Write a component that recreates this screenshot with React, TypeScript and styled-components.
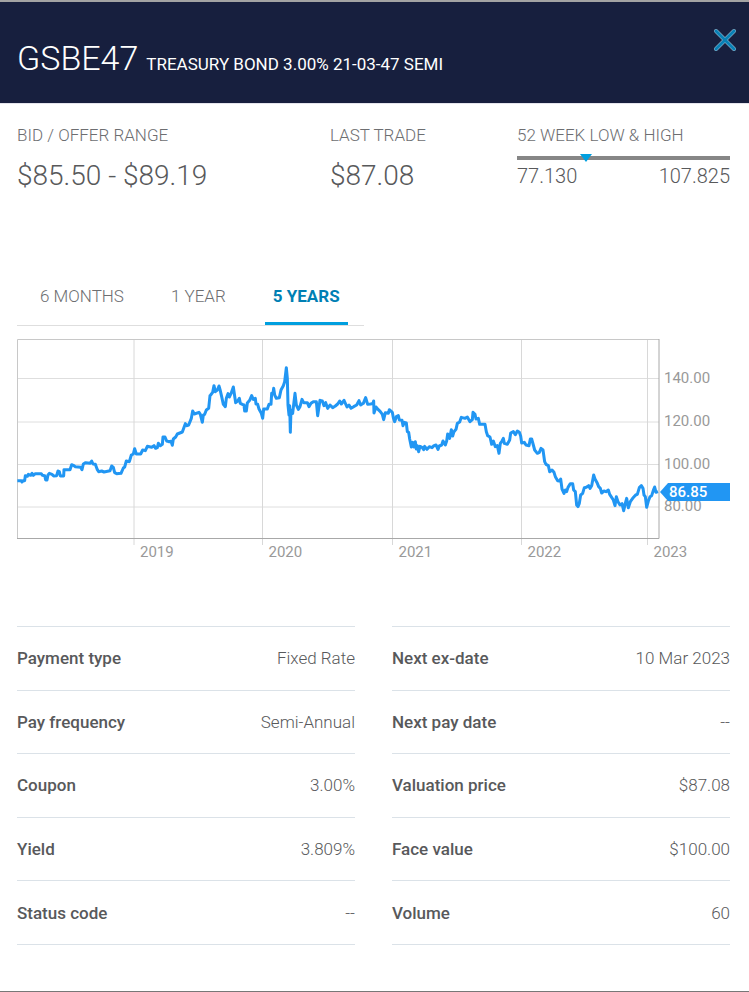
import React from "react";
import styled, { createGlobalStyle } from "styled-components";

const GlobalStyle = createGlobalStyle`
  *, *::before, *::after { box-sizing: border-box; }
  body {
    margin: 0;
    background: #fff;
    color: #58595b;
    font-family: Roboto, "Open Sans", sans-serif;
  }
`;

const Panel = styled.main`
  display: flex;
  flex-direction: column;
  min-height: 100vh;
  border-top: 2px solid #a3a3a3;
  border-bottom: 1px solid #777;
`;

const Header = styled.header`
  display: flex;
  align-items: flex-start;
  justify-content: space-between;
  padding: 24px 12px 17px 17px;
  background: #171f3e;
  color: #fff;
  border-bottom: 1px solid #e4e4ec;
`;

const Title = styled.h1`
  display: flex;
  flex-wrap: wrap;
  align-items: baseline;
  gap: 8px;
  margin: 11px 0 0;
  font-weight: 400;
  line-height: 43px;
`;

const Ticker = styled.span`
  font-size: 34px;
  font-weight: 300;
`;

const BondName = styled.span`
  font-size: 17px;
`;

const CloseButton = styled.button`
  display: flex;
  margin: 0;
  padding: 2px 0;
  border: 0;
  background: none;
  cursor: pointer;
`;

const Content = styled.div`
  padding: 18px 19px 0 17px;
`;

const Summary = styled.section`
  display: grid;
  grid-template-columns: 313fr 187fr 213fr;
`;

const Label = styled.h2`
  margin: 0;
  color: #6d6e71;
  font-size: 17px;
  font-weight: 300;
  line-height: 26px;
`;

const Price = styled.p`
  margin: 10px 0 0;
  font-size: 28px;
  font-weight: 300;
  line-height: 36px;
`;

const Track = styled.div`
  position: relative;
  height: 4px;
  margin-top: 8px;
  background: #868686;
`;

const Marker = styled.span`
  position: absolute;
  top: -2px;
  margin-left: -6px;
  border: 6px solid transparent;
  border-top: 8px solid #009fdf;
  border-bottom: 0;
`;

const RangeValues = styled.div`
  display: flex;
  justify-content: space-between;
  font-size: 20px;
  font-weight: 300;
  line-height: 32px;
`;

const Tabs = styled.div`
  display: flex;
  gap: 31px;
  width: fit-content;
  margin-top: 73px;
  padding: 0 16px 0 15px;
  border-bottom: 1px solid #dedede;
`;

const Tab = styled.button<{ $active: boolean }>`
  height: 58px;
  padding: 3px 8px 0;
  border: 0;
  border-bottom: 3px solid ${(p) => (p.$active ? "#009fdf" : "transparent")};
  background: none;
  color: ${(p) => (p.$active ? "#007fb4" : "#6d6e71")};
  font-family: inherit;
  font-size: 17px;
  font-weight: ${(p) => (p.$active ? 700 : 300)};
  cursor: pointer;
`;

const Chart = styled.svg`
  display: block;
  width: 100%;
  margin-top: 9px;
  font-family: Roboto, sans-serif;
  font-size: 15px;
`;

const Details = styled.section`
  display: grid;
  grid-template-columns: 1fr 1fr;
  gap: 37px;
  margin-top: 61px;
`;

const DetailTable = styled.table`
  width: 100%;
  height: 319px;
  border-collapse: collapse;
  font-size: 17px;
  line-height: 24px;

  tr { border-top: 1px solid #dbe2e8; }
  tr:last-child { border-bottom: 1px solid #dbe2e8; }
`;

const Name = styled.th`
  padding: 0;
  text-align: left;
  font-weight: 500;
`;

const Value = styled.td`
  padding: 0;
  text-align: right;
  font-weight: 300;
`;

// Price line in thirds of a chart unit, split by the column each run starts in.
const runs = [
  {
    start: -21,
    points:
      "22,437 34,437 36,441 39,437 44,437 46,422 52,424 55,418 62,421 66,415 70,421 76,416 94,416 97,421 104,422 107,435 111,435 114,420 118,415 126,418 131,423 140,422 144,408 148,410 151,423 161,423 162,404 180,404 185,389 190,391 196,395 212,397 216,404 220,387 227,383 240,385 245,378 249,387 256,388 262,404 266,410 275,408 282,411 300,407 305,393 310,397 314,413 320,416 333,415 340,399 344,396 349,378 358,380 364,360 370,357 374,341 379,357 392,357 398,345 406,347 412,334 425,337 432,332 437,340 442,338 445,325 451,332 457,328 459,306 465,306 470,318 476,320 483,319 487,331 490,312 497,306 502,297 517,291 526,266 531,272 536,270 544,250 548,228 553,237 567,232 571,238 577,262 580,240 584,238 589,225 596,220 600,182",
  },
  {
    start: 549,
    points:
      "32,180 38,172 42,152 46,170 52,165 57,153 60,163 65,185 70,208 76,215 79,190 84,176 88,186 93,176 100,156 105,190 107,203 113,198 118,190 121,205 127,208 132,210 134,228 139,228 142,204 149,196 155,182 160,193 166,190 168,207 173,208 177,222 184,235 188,250 191,222 202,222 207,208 213,208 215,175 219,175 221,160 224,180 229,190 238,188 243,165 250,152 254,140 259,98 262,130 264,210 267,240 269,212 271,292 273,225 278,235 282,200 285,175 289,210 295,223 300,215 306,193 311,203 322,203 327,215 333,205 340,200 349,200 353,242 357,215 360,196 367,198 372,212 377,203 383,220 390,210 398,218 406,213 413,207 419,198 424,207 432,196 441,216 447,210 453,220 461,215 470,210 477,197 482,210 490,205 497,188 503,208 512,207 519,205 521,198 522,234 528,216 535,224 541,230 547,238 551,254 556,233 565,235 568,224",
  },
  {
    start: 1119,
    points:
      "7,232 10,248 14,260 19,245 25,242 28,255 36,256 39,272 43,262 49,264 52,290 56,292 59,312 64,336 68,322 72,336 76,320 79,342 82,332 86,350 90,334 97,338 101,344 104,334 111,343 118,335 126,338 132,332 138,330 144,343 148,333 155,330 159,318 166,330 170,318 173,297 179,310 184,284 188,303 192,290 198,283 202,265 209,261 214,247 225,250 232,246 240,260 247,254 249,232 255,238 258,252 265,250 269,268 276,268 285,268 289,290 293,302 300,306 305,328 310,318 316,335 322,332 327,355 331,325 336,318 340,310 343,325 352,328 359,315 362,294 370,290 376,299 382,288 388,292 392,303 395,324 403,322 408,330 417,332 421,312 425,312 430,330 434,345 442,355 448,352 453,340 459,345 464,380 468,388 475,392 479,410 486,405 492,412 496,425 503,437 508,438",
  },
  {
    start: 1629,
    points:
      "2,432 6,462 12,475 16,465 20,470 24,457 31,446 38,446 41,465 46,470 50,510 54,515 58,505 62,480 68,475 73,458 79,457 86,452 90,460 95,452 101,420 105,432 112,445 116,455 121,460 125,474 132,468 138,470 145,465 149,478 153,484 160,495 165,512 169,485 174,500 180,510 186,506 191,527 196,505 200,490 205,518 211,500 218,490 227,480 232,478 238,458 244,452 249,460 252,480 256,485 260,517 265,498 270,485 275,482 280,466 284,456 288,472 294,470",
  },
];

const pricePoints = runs
  .flatMap(({ start, points }) =>
    points.split(" ").map((pair) => {
      const [x, y] = pair.split(",").map(Number);
      return `${(x + start) / 3},${y / 3}`;
    })
  )
  .join(" ");

const years = [
  { label: "2019", x: 117 },
  { label: "2020", x: 245.5 },
  { label: "2021", x: 375.5 },
  { label: "2022", x: 504.5 },
  { label: "2023", x: 630.5 },
];

const levels = [
  { label: "140.00", y: 43.5 },
  { label: "120.00", y: 87 },
  { label: "100.00", y: 129.5 },
  { label: "80.00", y: 172 },
];

const details = [
  [
    ["Payment type", "Fixed Rate"],
    ["Pay frequency", "Semi-Annual"],
    ["Coupon", "3.00%"],
    ["Yield", "3.809%"],
    ["Status code", "--"],
  ],
  [
    ["Next ex-date", "10 Mar 2023"],
    ["Next pay date", "--"],
    ["Valuation price", "$87.08"],
    ["Face value", "$100.00"],
    ["Volume", "60"],
  ],
];

const periods = ["6 MONTHS", "1 YEAR", "5 YEARS"];

function PriceChart() {
  return (
    <Chart viewBox="0 0 713 230" role="img" aria-label="Price over five years">
      {levels.map(({ label, y }) => (
        <g key={label}>
          <path d={`M0 ${y}H642`} stroke="#dedede" />
          <text x="647" y={y + 4} fill="#999">{label}</text>
        </g>
      ))}
      {years.map(({ label, x }) => (
        <g key={label}>
          <path d={`M${x} 4V210`} stroke="#d8d8d8" />
          <text x={x + 6} y="222" fill="#999">{label}</text>
        </g>
      ))}
      <path d="M0.5 203V4.5H642" fill="none" stroke="#c8c8c8" />
      <path d="M0 203.5H642V4" fill="none" stroke="#a8a8a8" />
      <polyline
        points={pricePoints}
        fill="none"
        stroke="#2196f3"
        strokeWidth="3"
        strokeLinejoin="round"
      />
      <path d="M643 157L651 148H713V166H651Z" fill="#2196f3" />
      <text x="652" y="162" fill="#fff" fontWeight="500">86.85</text>
    </Chart>
  );
}

export default function App() {
  const [period, setPeriod] = React.useState("5 YEARS");
  const low = 77.13;
  const high = 107.825;
  const last = 87.08;
  const position = ((last - low) / (high - low)) * 100;

  return (
    <>
      <GlobalStyle />
      <Panel>
        <Header>
          <Title>
            <Ticker>GSBE47</Ticker>
            <BondName>TREASURY BOND 3.00% 21-03-47 SEMI</BondName>
          </Title>
          <CloseButton type="button" aria-label="Close">
            <svg width="24" height="24" viewBox="0 0 24 24" strokeLinecap="round">
              <path d="M3 3L21 21M21 3L3 21" stroke="#8fb3cc" strokeWidth="4" />
              <path d="M3 3L21 21M21 3L3 21" stroke="#0880b5" strokeWidth="3" />
            </svg>
          </CloseButton>
        </Header>
        <Content>
          <Summary>
            <div>
              <Label>BID / OFFER RANGE</Label>
              <Price>$85.50 - $89.19</Price>
            </div>
            <div>
              <Label>LAST TRADE</Label>
              <Price>$87.08</Price>
            </div>
            <div>
              <Label>52 WEEK LOW &amp; HIGH</Label>
              <Track>
                <Marker style={{ left: `${position}%` }} />
              </Track>
              <RangeValues>
                <span>77.130</span>
                <span>107.825</span>
              </RangeValues>
            </div>
          </Summary>
          <Tabs role="tablist">
            {periods.map((name) => (
              <Tab
                key={name}
                type="button"
                role="tab"
                aria-selected={name === period}
                $active={name === period}
                onClick={() => setPeriod(name)}
              >
                {name}
              </Tab>
            ))}
          </Tabs>
          <PriceChart />
          <Details>
            {details.map((rows) => (
              <DetailTable key={rows[0][0]}>
                <tbody>
                  {rows.map(([name, value]) => (
                    <tr key={name}>
                      <Name scope="row">{name}</Name>
                      <Value>{value}</Value>
                    </tr>
                  ))}
                </tbody>
              </DetailTable>
            ))}
          </Details>
        </Content>
      </Panel>
    </>
  );
}
